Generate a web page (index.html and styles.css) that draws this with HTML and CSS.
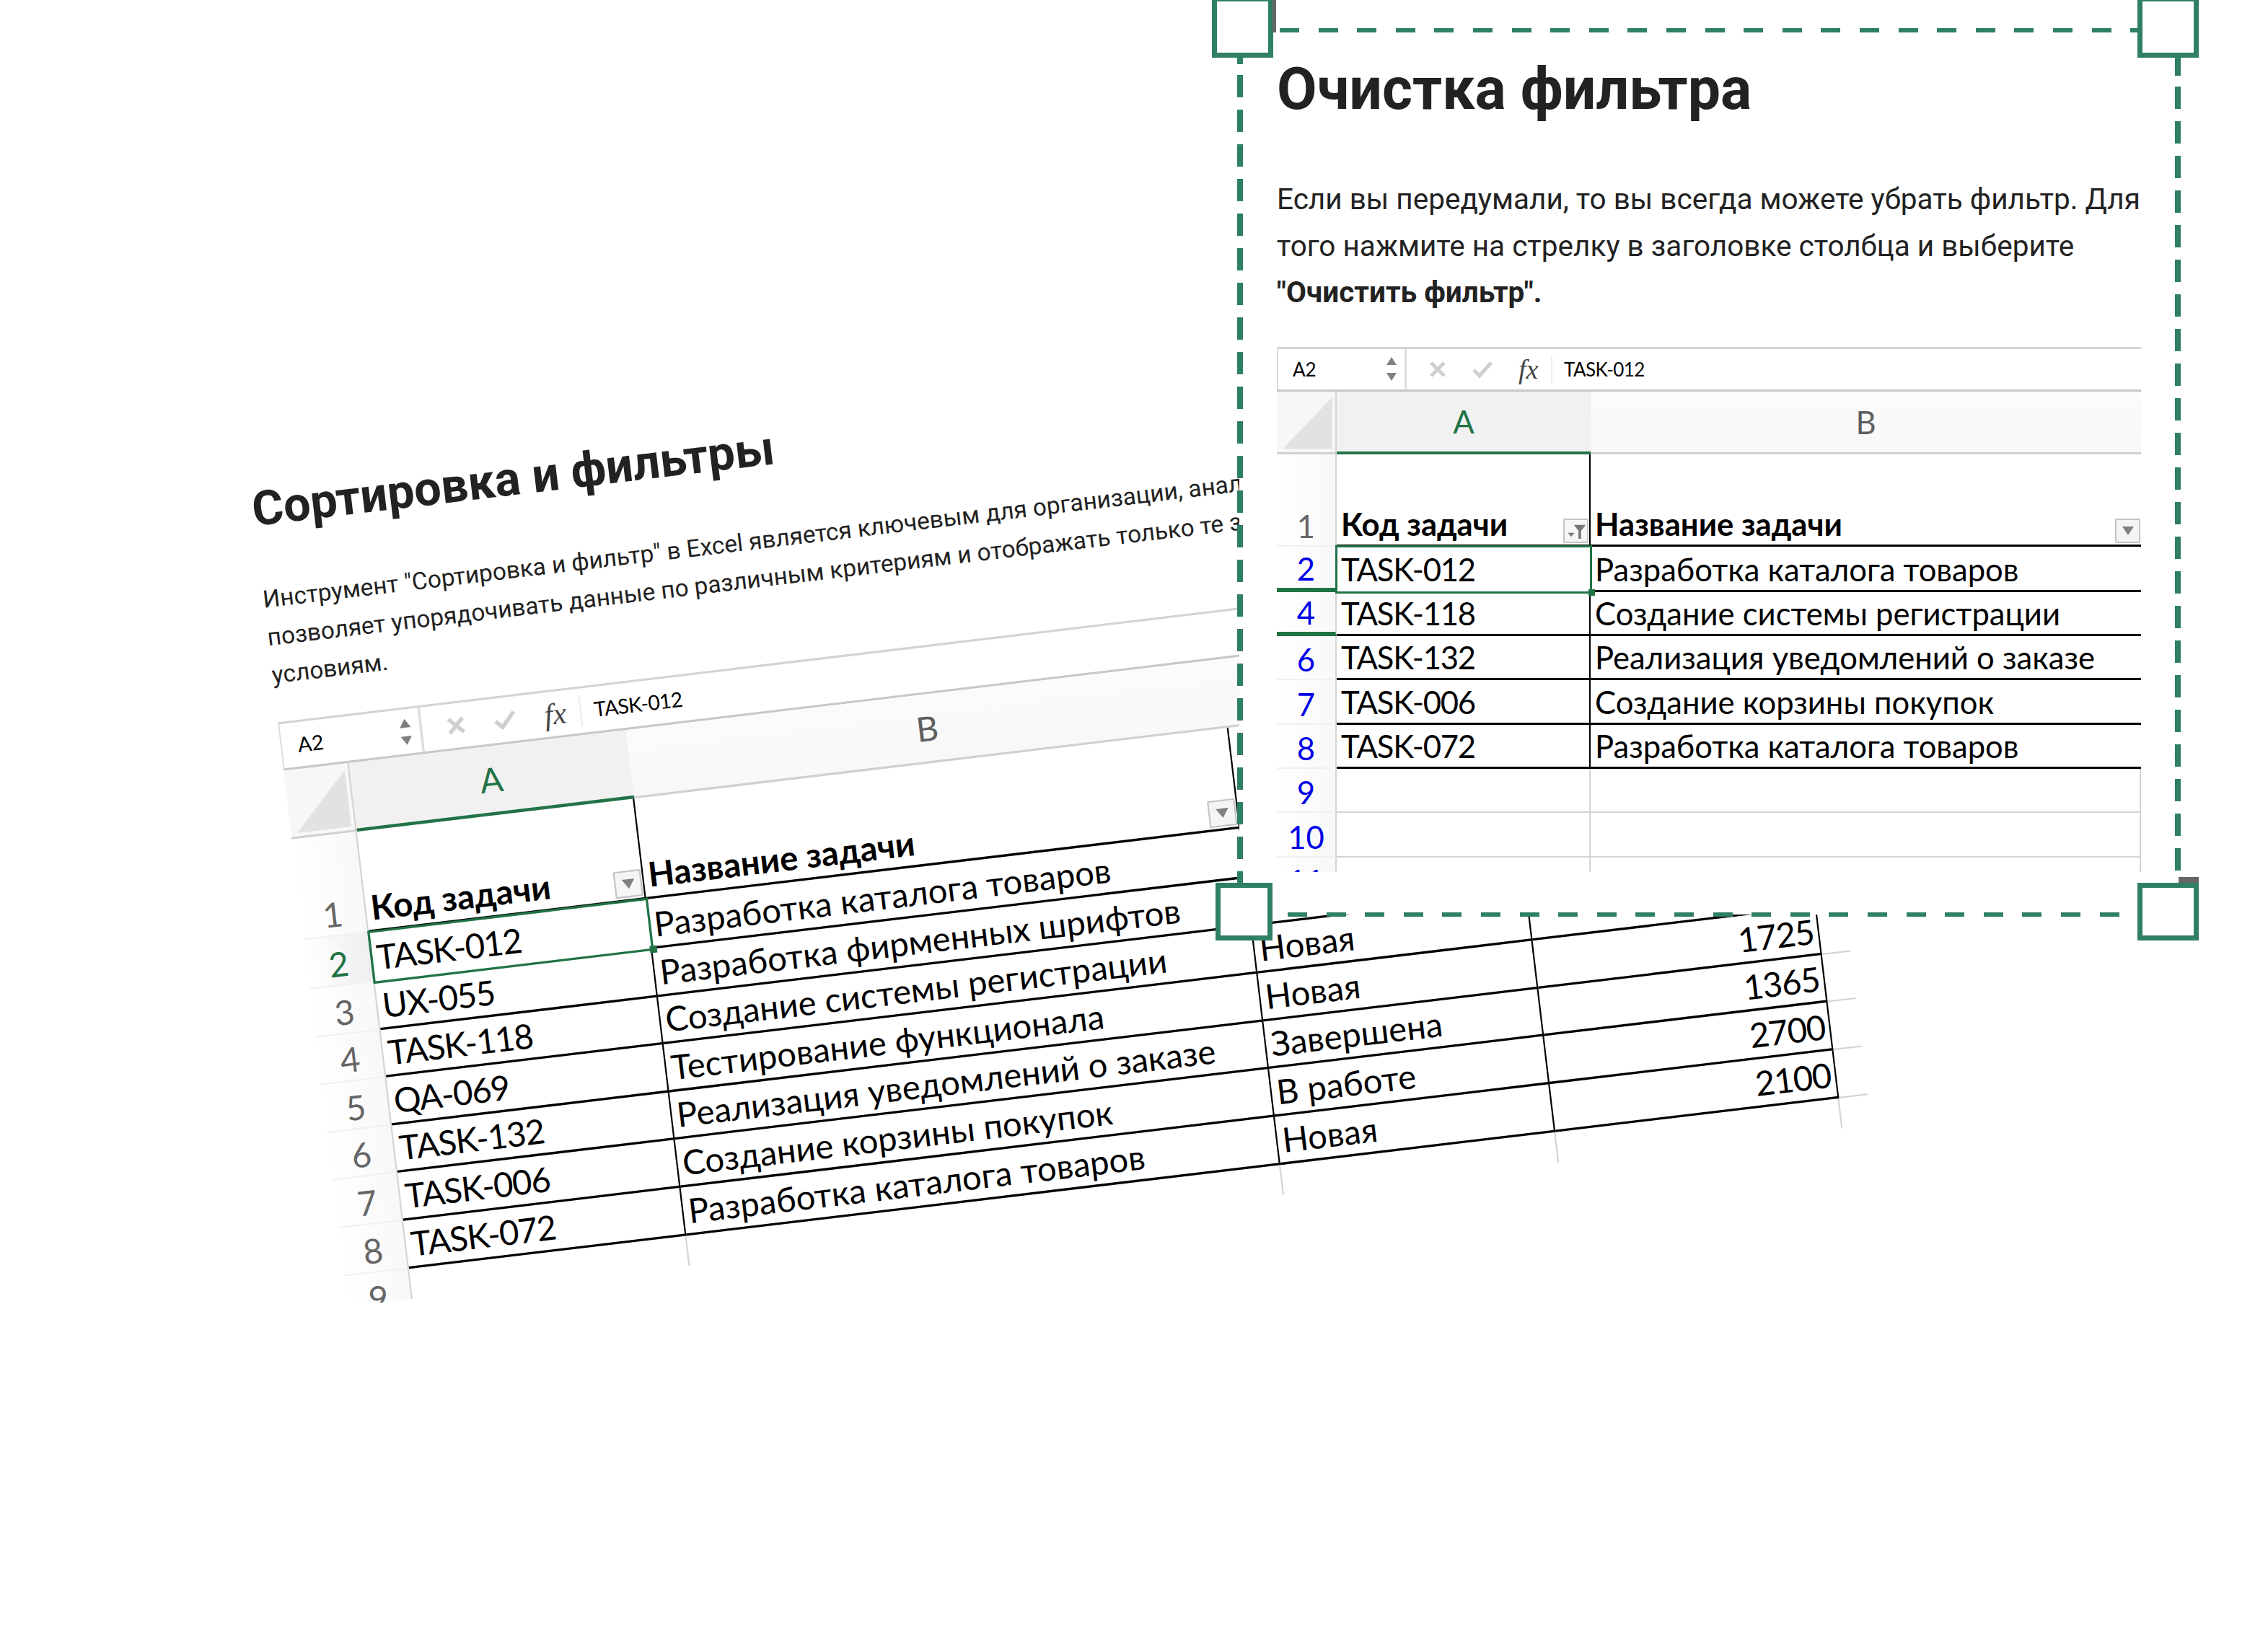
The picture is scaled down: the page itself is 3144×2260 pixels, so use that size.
FILE: index.html
```html
<!DOCTYPE html>
<html lang="ru">
<head>
    <meta charset="UTF-8">
    <meta name="viewport" content="width=device-width, initial-scale=1.0">
    <title>Очистка фильтра</title>
    <link rel="stylesheet" href="styles.css">
</head>
<body>
    <main class="stage">

        <!-- Back slide, tilted -->
        <section class="slide slide-back">
            <h2 class="slide-title">Сортировка и фильтры</h2>
            <p class="slide-text">Инструмент "Сортировка и фильтр" в Excel является ключевым для организации, анализа<br>позволяет упорядочивать данные по различным критериям и отображать только те записи<br>условиям.</p>

            <div class="sheet sheet-wide">
                <div class="formula-bar">
                    <div class="name-box"><span>A2</span><div class="spin"><i class="spin-up"></i><i class="spin-down"></i></div></div>
                    <div class="formula-tools">
                        <svg class="tool-icon" viewBox="0 0 24 24"><path d="M3 3 21 21M21 3 3 21"/></svg>
                        <svg class="tool-icon" viewBox="0 0 30 24"><path d="M3 13 11 21 27 3"/></svg>
                        <span class="fx">fx</span>
                    </div>
                    <div class="formula-value">TASK-012</div>
                </div>
                <div class="row row-columns">
                    <div class="corner"></div>
                    <div class="col-name col-active">A</div>
                    <div class="col-name">B</div>
                    <div class="col-name"></div>
                    <div class="col-name"></div>
                    <div class="col-name"></div>
                </div>
                <div class="row row-title">
                    <div class="num">1</div>
                    <div class="cell bold">Код задачи<button class="filter-btn"><i class="arrow"></i></button></div>
                    <div class="cell bold">Название задачи<button class="filter-btn"><i class="arrow"></i></button></div>
                    <div class="cell"></div>
                    <div class="cell"></div>
                    <div class="cell stub"></div>
                </div>
                <div class="row row-first">
                    <div class="num num-current">2</div>
                    <div class="cell cell-active code">TASK-012</div>
                    <div class="cell">Разработка каталога товаров</div>
                    <div class="cell"></div>
                    <div class="cell"></div>
                    <div class="cell stub"></div>
                </div>
                <div class="row">
                    <div class="num">3</div>
                    <div class="cell code">UX-055</div>
                    <div class="cell">Разработка фирменных шрифтов</div>
                    <div class="cell"></div>
                    <div class="cell"></div>
                    <div class="cell stub"></div>
                </div>
                <div class="row">
                    <div class="num">4</div>
                    <div class="cell code">TASK-118</div>
                    <div class="cell">Создание системы регистрации</div>
                    <div class="cell">Новая</div>
                    <div class="cell"></div>
                    <div class="cell stub"></div>
                </div>
                <div class="row">
                    <div class="num">5</div>
                    <div class="cell code">QA-069</div>
                    <div class="cell">Тестирование функционала</div>
                    <div class="cell">Новая</div>
                    <div class="cell num-right">1725</div>
                    <div class="cell stub"></div>
                </div>
                <div class="row">
                    <div class="num">6</div>
                    <div class="cell code">TASK-132</div>
                    <div class="cell">Реализация уведомлений о заказе</div>
                    <div class="cell">Завершена</div>
                    <div class="cell num-right">1365</div>
                    <div class="cell stub"></div>
                </div>
                <div class="row">
                    <div class="num">7</div>
                    <div class="cell code">TASK-006</div>
                    <div class="cell">Создание корзины покупок</div>
                    <div class="cell">В работе</div>
                    <div class="cell num-right">2700</div>
                    <div class="cell stub"></div>
                </div>
                <div class="row">
                    <div class="num">8</div>
                    <div class="cell code">TASK-072</div>
                    <div class="cell">Разработка каталога товаров</div>
                    <div class="cell">Новая</div>
                    <div class="cell num-right">2100</div>
                    <div class="cell stub"></div>
                </div>
                <div class="row">
                    <div class="num">9</div>
                    <div class="cell cell-empty"></div>
                    <div class="cell cell-empty"></div>
                    <div class="cell cell-empty"></div>
                    <div class="cell cell-empty"></div>
                    <div class="cell no-line"></div>
                </div>
            </div>
        </section>

        <!-- Front slide, selected -->
        <section class="slide slide-front">
            <h2 class="slide-title">Очистка фильтра</h2>
            <p class="slide-text">Если вы передумали, то вы всегда можете убрать фильтр. Для<br>того нажмите на стрелку в заголовке столбца и выберите<br><b>"Очистить фильтр".</b></p>

            <div class="sheet sheet-narrow">
                <div class="formula-bar">
                    <div class="name-box"><span>A2</span><div class="spin"><i class="spin-up"></i><i class="spin-down"></i></div></div>
                    <div class="formula-tools">
                        <svg class="tool-icon" viewBox="0 0 24 24"><path d="M3 3 21 21M21 3 3 21"/></svg>
                        <svg class="tool-icon" viewBox="0 0 30 24"><path d="M3 13 11 21 27 3"/></svg>
                        <span class="fx">fx</span>
                    </div>
                    <div class="formula-value">TASK-012</div>
                </div>
                <div class="row row-columns">
                    <div class="corner"></div>
                    <div class="col-name col-active">A</div>
                    <div class="col-name">B</div>
                </div>
                <div class="row row-title">
                    <div class="num">1</div>
                    <div class="cell bold">Код задачи
                        <button class="filter-btn">
                            <svg viewBox="0 0 34 32"><path class="filter-small" d="M5 19H15L10 25Z"/><path class="filter-funnel" d="M14 7H32L25 16V28H21V16Z"/></svg>
                        </button>
                    </div>
                    <div class="cell bold no-right">Название задачи<button class="filter-btn"><i class="arrow"></i></button></div>
                </div>
                <div class="row row-first">
                    <div class="num num-filtered num-marked">2</div>
                    <div class="cell cell-active code">TASK-012</div>
                    <div class="cell no-right">Разработка каталога товаров</div>
                </div>
                <div class="row">
                    <div class="num num-filtered num-marked">4</div>
                    <div class="cell code">TASK-118</div>
                    <div class="cell no-right">Создание системы регистрации</div>
                </div>
                <div class="row">
                    <div class="num num-filtered">6</div>
                    <div class="cell code">TASK-132</div>
                    <div class="cell no-right">Реализация уведомлений о заказе</div>
                </div>
                <div class="row">
                    <div class="num num-filtered">7</div>
                    <div class="cell code">TASK-006</div>
                    <div class="cell no-right">Создание корзины покупок</div>
                </div>
                <div class="row">
                    <div class="num num-filtered">8</div>
                    <div class="cell code">TASK-072</div>
                    <div class="cell no-right">Разработка каталога товаров</div>
                </div>
                <div class="row">
                    <div class="num num-filtered">9</div>
                    <div class="cell cell-empty"></div>
                    <div class="cell cell-empty no-right"></div>
                </div>
                <div class="row">
                    <div class="num num-filtered">10</div>
                    <div class="cell cell-empty"></div>
                    <div class="cell cell-empty no-right"></div>
                </div>
                <div class="row">
                    <div class="num num-filtered">11</div>
                    <div class="cell cell-empty"></div>
                    <div class="cell cell-empty no-right"></div>
                </div>
            </div>

            <!-- Selection frame -->
            <div class="dash dash-top"></div>
            <div class="dash dash-bottom"></div>
            <div class="dash dash-left"></div>
            <div class="dash dash-right"></div>
            <div class="handle handle-tl"></div>
            <div class="handle handle-tr"></div>
            <div class="handle handle-bl"></div>
            <div class="handle handle-br"></div>
        </section>

    </main>
</body>
</html>
```

FILE: styles.css
```css
/* General styles */
* {
    box-sizing: border-box;
}

body {
    margin: 0;
    background-color: #ffffff;
    font-family: "Roboto", sans-serif;
}

.stage {
    position: relative;
    width: 3144px;
    height: 2260px;
    overflow: hidden;
}

/* Slides sit on a free canvas */
.slide {
    position: absolute;
    color: #222222;
}

.slide-title {
    margin: 0;
    font-weight: 700;
    white-space: nowrap;
}

.slide-text {
    margin: 0;
    white-space: nowrap;
}

.slide-back {
    left: 345px;
    top: 668px;
    width: 1946px;
    transform-origin: 0 0;
    transform: rotate(-6.8deg) scale(1.1);
}

.slide-back .slide-title {
    font-size: 60.5px;
    line-height: 72px;
}

.slide-back .slide-text {
    margin-top: 54px;
    font-size: 30.4px;
    line-height: 48px;
}

.slide-back .sheet {
    margin-top: 35px;
}

.slide-front {
    left: 1718px;
    top: 42px;
    width: 1301px;
    height: 1226px;
    padding: 0 0 0 52px;
    background-color: #ffffff;
}

.slide-front .slide-title {
    padding-top: 32px;
    font-size: 80.7px;
    line-height: 100px;
}

.slide-front .slide-text {
    margin-top: 70px;
    font-size: 40.5px;
    line-height: 64.5px;
}

.slide-front .sheet {
    margin-top: 43px;
}

/* Spreadsheet */
.sheet {
    overflow: hidden;
    font-family: "Lato", "Noto Sans", sans-serif;
    color: #000000;
}

.sheet-narrow {
    --cols: 83px 352px 763px;
    --row-h: 61.4px;
    width: 1198px;
    height: 728px;
    font-size: 43.6px;
}

.sheet-wide {
    --cols: 83px 352px 754px 349px 360px 36px;
    --row-h: 60.6px;
    width: 1946px;
    height: 742px;
    font-size: 43px;
}

.formula-bar {
    display: flex;
    height: 62px;
    border-top: 3px solid #d4d4d4;
    border-bottom: 3px solid #c8c8c8;
    font-size: 26px;
}

.name-box {
    display: flex;
    align-items: center;
    justify-content: space-between;
    width: 180px;
    padding: 0 11px 0 20px;
    border-left: 2px solid #dddddd;
    border-right: 3px solid #dddddd;
}

.spin {
    display: flex;
    flex-direction: column;
    gap: 11px;
}

.spin i {
    display: block;
    width: 0;
    height: 0;
    border-left: 7px solid transparent;
    border-right: 7px solid transparent;
}

.spin-up {
    border-bottom: 11px solid #808080;
}

.spin-down {
    border-top: 11px solid #808080;
}

.formula-tools {
    display: flex;
    align-items: center;
    gap: 35px;
    width: 202px;
    padding-left: 31px;
    border-right: 2px solid #eeeeee;
    margin: 8px 0;
}

.tool-icon {
    flex: none;
    width: 24px;
    height: 24px;
    fill: none;
    stroke: #cfcfcf;
    stroke-width: 5;
}

.tool-icon + .tool-icon {
    width: 30px;
}

.fx {
    font-family: "Liberation Serif", serif;
    font-style: italic;
    font-size: 38px;
    color: #444444;
}

.formula-value {
    display: flex;
    align-items: center;
    padding-left: 16px;
    letter-spacing: -0.6px;
}

.row {
    display: grid;
    grid-template-columns: var(--cols);
    height: var(--row-h);
}

.row-columns {
    height: 87px;
    border-bottom: 3px solid #d0d0d0;
}

.row-title {
    height: 128px;
}

.row-first {
    height: 63px;
}

.corner {
    position: relative;
    background-color: #f7f7f7;
    border-right: 2px solid #d4d4d4;
}

.corner::after {
    content: "";
    position: absolute;
    left: 8px;
    right: 4px;
    top: 8px;
    bottom: 4px;
    background-color: #e2e2e2;
    clip-path: polygon(100% 0, 100% 100%, 0 100%);
}

.col-name {
    display: flex;
    align-items: center;
    justify-content: center;
    background-image: linear-gradient(#fbfbfb, #f8f8f8);
    color: #5f5f5f;
}

.col-active {
    margin-bottom: -3px;
    background-image: none;
    background-color: #f1f1f1;
    border-bottom: 4px solid #217346;
    color: #217346;
}

.num {
    display: flex;
    align-items: flex-end;
    justify-content: center;
    padding-bottom: 1px;
    background-image: linear-gradient(90deg, #ffffff, #f8f8f8);
    border-right: 2px solid #d4d4d4;
    border-bottom: 2px solid #f0f0f0;
    color: #666666;
}

.num-current {
    background-image: linear-gradient(90deg, #ffffff, #efefef);
    color: #217346;
}

.num-filtered {
    color: #0000e6;
}

.num-marked {
    border-bottom: 6px solid #217346;
}

.cell {
    display: flex;
    align-items: flex-end;
    position: relative;
    padding: 0 0 3px 6px;
    border-right: 2px solid #000000;
    border-bottom: 3px solid #000000;
    white-space: nowrap;
}

.bold {
    font-weight: 700;
}

.code {
    letter-spacing: -1.2px;
}

.no-right {
    border-right: none;
}

.num-right {
    justify-content: flex-end;
    padding-right: 5px;
    letter-spacing: -1px;
}

.stub {
    border-right: none;
    border-bottom: 2px solid #d4d4d4;
}

.cell-empty {
    border-right: 2px solid #d4d4d4;
    border-bottom: 2px solid #d4d4d4;
}

.no-line {
    border: none;
}

.cell-active {
    z-index: 1;
    outline: 3px solid #217346;
    outline-offset: -1px;
    border: none;
    padding-bottom: 6px;
}

.cell-active::after {
    content: "";
    position: absolute;
    right: -6px;
    bottom: -5px;
    width: 9px;
    height: 9px;
    background-color: #217346;
}

.filter-btn {
    position: absolute;
    right: 1px;
    bottom: 2px;
    display: flex;
    align-items: center;
    justify-content: center;
    width: 35px;
    height: 34px;
    padding: 0;
    background-color: #f5f5f5;
    border: 2px solid #c4c4c4;
    border-radius: 2px;
}

.filter-btn svg {
    width: 100%;
    height: 100%;
}

.filter-small,
.filter-funnel {
    fill: #777777;
}

.arrow {
    display: block;
    width: 0;
    height: 0;
    border-left: 8px solid transparent;
    border-right: 8px solid transparent;
    border-top: 12px solid #808080;
}

/* Selection frame around the front slide */
.dash {
    position: absolute;
}

.dash-top,
.dash-bottom {
    left: 46px;
    right: 44px;
    height: 6px;
    background-image: repeating-linear-gradient(90deg, #2f7f66 0 27px, transparent 27px 53.6px);
}

.dash-top {
    top: -3px;
    background-position: 10px 0;
}

.dash-bottom {
    left: 67px;
    bottom: -3px;
}

.dash-left,
.dash-right {
    top: 38px;
    bottom: 38px;
    width: 8px;
    background-image: repeating-linear-gradient(#2f7f66 0 31px, transparent 31px 48px);
}

.dash-left {
    left: -3px;
    background-position: 0 24px;
}

.dash-right {
    right: -4px;
    background-position: 0 40px;
}

.handle {
    position: absolute;
    width: 85px;
    height: 80px;
    background-color: #ffffff;
    border: 7px solid #2f7f66;
}

.handle-tl {
    left: -38px;
    top: -47px;
    height: 85px;
}

/* dark slivers left by the screenshot */
.handle-tl::after {
    content: "";
    position: absolute;
    left: 77px;
    top: -2px;
    width: 5px;
    height: 45px;
    background-color: #666666;
}

.handle-tr {
    right: -29px;
    top: -47px;
    height: 85px;
}

.handle-bl {
    left: -33px;
    bottom: -36px;
    width: 79px;
}

.handle-br {
    right: -29px;
    bottom: -36px;
}

.handle-br::after {
    content: "";
    position: absolute;
    right: -7px;
    top: -15px;
    width: 28px;
    height: 8px;
    background-color: #666666;
}
```
